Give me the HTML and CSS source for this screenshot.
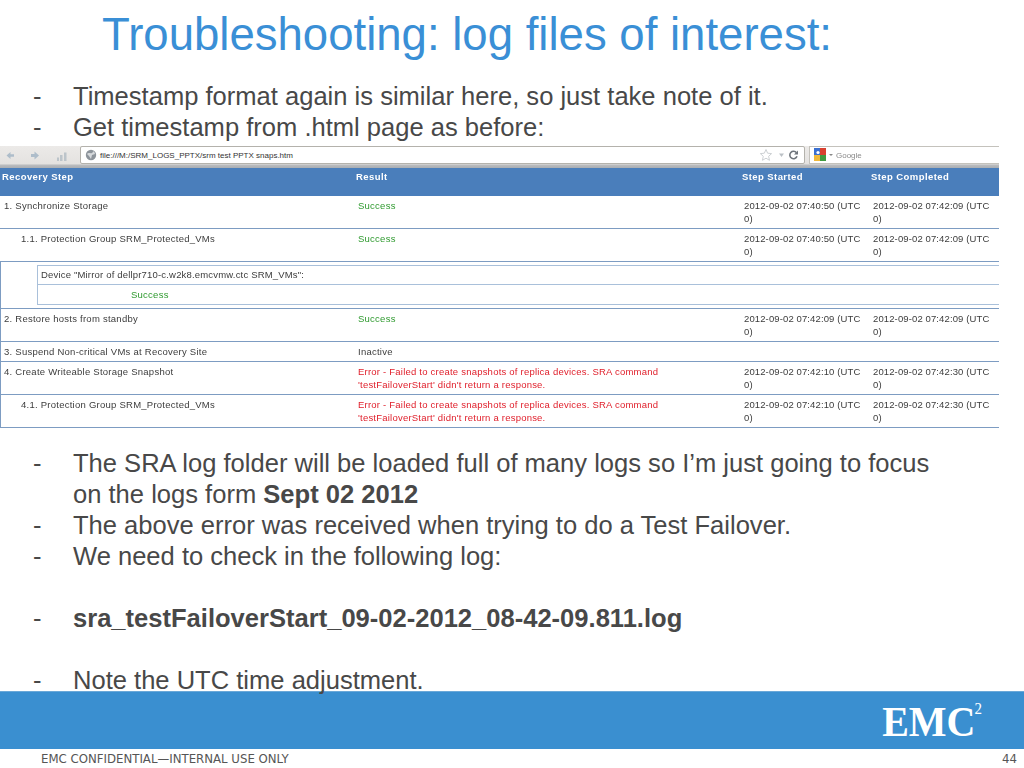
FILE: index.html
```html
<!DOCTYPE html>
<html lang="en">
<head>
<meta charset="utf-8">
<title>Troubleshooting: log files of interest</title>
<link rel="stylesheet" href="styles.css">
</head>
<body>
<main class="slide">
  <h1 class="title">Troubleshooting: log files of interest:</h1>
  <ul class="bullets top">
    <li><span class="dash">-</span><span>Timestamp format again is similar here, so just take note of it.</span></li>
    <li><span class="dash">-</span><span>Get timestamp from .html page as before:</span></li>
  </ul>
  <section class="shot">
    <div class="browser">
      <svg class="nav" width="70" height="14" viewBox="0 0 70 14">
        <path d="M2.500 6.500 6.500 3v2.200H10v2.600H6.500V10z" fill="#aebdca"/>
        <path d="M35 6.500 30.500 2.500V5H27v3h3.500v2.500z" fill="#aebdca"/>
        <path d="M53 8.500h2V12h-2zM56 6h2.500v6H56zM60 3.500h2.500V12H60z" fill="#bcc4ca"/>
      </svg>
      <div class="url">
        <svg width="12" height="12" viewBox="0 0 12 12"><circle cx="6" cy="6" r="5.200" fill="#8d949b"/><path d="M2 5c2-2 3 0 5-1l2-2 1 3-3 1-1 4-2-3z" fill="#d6d9dc"/></svg>
        <span class="url-text">file:///M:/SRM_LOGS_PPTX/srm test PPTX snaps.htm</span>
        <svg class="url-tools" width="44" height="14" viewBox="0 0 44 14">
          <path d="M9 1.500 10.600 5.200l4 .4-3 2.700.9 4L9 10.200l-3.600 2.100.9-4-3-2.700 4-.4z" fill="#fff" stroke="#cdd1d4"/>
          <path d="M22 5.500h5l-2.500 3.500z" fill="#bcc1c6"/>
          <path d="M39.500 4.800a3.700 3.700 0 1 0 .5 3.500" fill="none" stroke="#6f757c" stroke-width="1.600"/>
          <path d="M41 2.500v4h-4z" fill="#6f757c"/>
        </svg>
      </div>
      <div class="search">
        <svg width="22" height="14" viewBox="0 0 22 14">
          <path d="M1 0h6v7H1z" fill="#3a6fd0"/><path d="M7 0h6v7H7z" fill="#d8402f"/><path d="M1 7h6v6H1z" fill="#f0b93a"/><path d="M7 7h6v6H7z" fill="#3f9a3f"/>
          <circle cx="5" cy="4.500" r="1.600" fill="#fff"/>
          <path d="M16 6h4l-2 2z" fill="#888"/>
        </svg>
        <span class="search-text">Google</span>
      </div>
    </div>
    <div class="row head">
      <div class="cell">Recovery Step</div>
      <div class="cell">Result</div>
      <div class="cell">Step Started</div>
      <div class="cell">Step Completed</div>
    </div>
    <div class="row tall">
      <div class="cell step">1. Synchronize Storage</div>
      <div class="cell ok">Success</div>
      <div class="cell time">2012-09-02 07:40:50 (UTC 0)</div>
      <div class="cell time">2012-09-02 07:42:09 (UTC 0)</div>
    </div>
    <div class="row tall">
      <div class="cell step sub">1.1. Protection Group SRM_Protected_VMs</div>
      <div class="cell ok">Success</div>
      <div class="cell time">2012-09-02 07:40:50 (UTC 0)</div>
      <div class="cell time">2012-09-02 07:42:09 (UTC 0)</div>
    </div>
    <div class="framed">
      <div class="device">
        <div class="device-box">
          <div class="device-name">Device "Mirror of dellpr710-c.w2k8.emcvmw.ctc SRM_VMs":</div>
          <div class="device-status ok">Success</div>
        </div>
      </div>
      <div class="row tall">
        <div class="cell step">2. Restore hosts from standby</div>
        <div class="cell ok">Success</div>
        <div class="cell time">2012-09-02 07:42:09 (UTC 0)</div>
        <div class="cell time">2012-09-02 07:42:09 (UTC 0)</div>
      </div>
      <div class="row short">
        <div class="cell step">3. Suspend Non-critical VMs at Recovery Site</div>
        <div class="cell">Inactive</div>
        <div class="cell"></div>
        <div class="cell"></div>
      </div>
      <div class="row tall">
        <div class="cell step">4. Create Writeable Storage Snapshot</div>
        <div class="cell err">Error - Failed to create snapshots of replica devices. SRA command 'testFailoverStart' didn't return a response.</div>
        <div class="cell time">2012-09-02 07:42:10 (UTC 0)</div>
        <div class="cell time">2012-09-02 07:42:30 (UTC 0)</div>
      </div>
      <div class="row tall">
        <div class="cell step sub">4.1. Protection Group SRM_Protected_VMs</div>
        <div class="cell err">Error - Failed to create snapshots of replica devices. SRA command 'testFailoverStart' didn't return a response.</div>
        <div class="cell time">2012-09-02 07:42:10 (UTC 0)</div>
        <div class="cell time">2012-09-02 07:42:30 (UTC 0)</div>
      </div>
    </div>
  </section>
  <ul class="bullets bottom">
    <li><span class="dash">-</span><span>The SRA log folder will be loaded full of many logs so I’m just going to focus on the logs form <b>Sept 02 2012</b></span></li>
    <li><span class="dash">-</span><span>The above error was received when trying to do a Test Failover.</span></li>
    <li><span class="dash">-</span><span>We need to check in the following log:</span></li>
    <li class="gap"><span class="dash">-</span><span><b>sra_testFailoverStart_09-02-2012_08-42-09.811.log</b></span></li>
    <li class="gap"><span class="dash">-</span><span>Note the UTC time adjustment.</span></li>
  </ul>
</main>
<div class="band"><div class="logo">EMC<sup class="two">2</sup></div></div>
<footer class="foot"><span>EMC CONFIDENTIAL—INTERNAL USE ONLY</span><span>44</span></footer>
</body>
</html>
```
FILE: styles.css
```css
* { box-sizing: border-box; }
html, body { margin: 0; padding: 0; }
body { width: 1024px; height: 768px; overflow: hidden; background: #fff; font-family: "Liberation Sans", Arial, sans-serif; color: #484848; display: flex; flex-direction: column; }
.slide { flex: none; height: 691px; position: relative; z-index: 1; }
.title { margin: 0; padding: 8px 0 0 102px; height: 81px; font-size: 45.550px; line-height: 54px; font-weight: 400; color: #3a8fd6; white-space: nowrap; }
.bullets { list-style: none; margin: 0; padding: 0 90px 0 33px; font-size: 25.550px; line-height: 31px; }
.bullets li { display: flex; }
.bullets .dash { flex: 0 0 40px; }
.bullets.top { height: 65px; }
.bullets.bottom { padding-top: 20px; }
.bullets .gap { margin-top: 31px; }
.shot { width: 999px; font-size: 9.500px; line-height: 13px; color: #3c3c3c; letter-spacing: .25px; filter: blur(.3px); }
.browser { height: 22px; display: flex; align-items: flex-start; background: linear-gradient(#eceae8 0, #e4e2e0 80%, #b9bbbd 88%, #a9adb2 100%); padding-left: 4px; }
.nav { flex: 0 0 70px; margin-top: 3px; }
.url { margin-left: 6px; width: 725px; height: 18px; background: #fff; border: 1px solid #b4b2ac; border-radius: 2px; display: flex; align-items: center; padding: 0 3px 0 4px; gap: 3px; }
.url-text { flex: 1; font-size: 8px; letter-spacing: 0; color: #333; white-space: nowrap; }
.search { margin-left: 4px; flex: 1; height: 18px; background: #fff; border: 1px solid #c4c2bc; border-right: 0; display: flex; align-items: center; padding-left: 3px; gap: 1px; }
.search-text { font-size: 8px; letter-spacing: 0; color: #8a8a8a; }
.row { display: grid; grid-template-columns: 354px 386px 129px 130px; border-bottom: 1px solid #7d9cc2; }
.cell { padding: 3px 4px 0 4px; }
.time { letter-spacing: .12px; }
.tall { height: 33px; }
.short { height: 20px; }
.head { height: 28px; background: #4a7ebb; color: #fff; font-weight: 700; border-bottom: 0; letter-spacing: .42px; }
.head .cell { padding: 2px 2px 0 2px; }
.sub { padding-left: 21px; }
.ok { color: #2f9a2f; }
.err { color: #e0202c; padding-right: 60px; letter-spacing: .22px; }
.framed { border-left: 1px solid #7d9cc2; }
.framed .row { grid-template-columns: 353px 386px 129px 130px; }
.framed .step { padding-left: 3px; }
.framed .sub { padding-left: 20px; }
.device { height: 47px; padding: 3px 0 3px 36px; border-bottom: 1px solid #7d9cc2; }
.device-box { height: 40px; border: 1px solid #a9c0da; border-right: 0; }
.device-name { height: 19px; padding: 2px 3px; border-bottom: 1px solid #a9c0da; letter-spacing: .18px; }
.device-status { padding: 3px 0 0 93px; }
.band { flex: none; height: 58px; background: #3a8fd0; border-top: 1px solid #6aa8d8; display: flex; justify-content: flex-end; padding: 3px 42px 0 0; }
.logo { height: 54px; font-family: "Liberation Serif", serif; font-weight: 700; font-size: 40px; line-height: 54px; color: #fff; transform: scaleY(1.08); }
.two { font-size: 15px; font-weight: 400; line-height: 0; vertical-align: 20px; margin-left: -1px; }
.foot { flex: 1; display: flex; justify-content: space-between; padding: 3px 7px 0 41px; font-family: "DejaVu Sans", sans-serif; font-size: 11.750px; line-height: 14px; color: #555; }
```
